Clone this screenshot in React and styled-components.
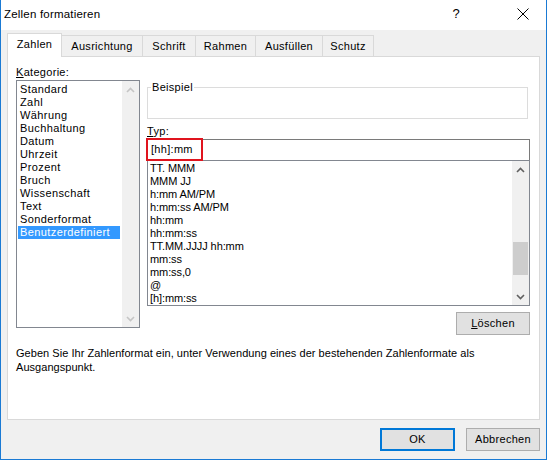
import React from "react";
import styled, { createGlobalStyle } from "styled-components";

const GlobalStyle = createGlobalStyle`
  html, body { margin: 0; padding: 0; background: #ffffff; }
  * { box-sizing: border-box; }
`;

const UI = `"Liberation Sans", Arial, sans-serif`;
const LISTFONT = `"Liberation Sans", Arial, sans-serif`;

const Window = styled.div`
  width: 547px;
  height: 460px;
  border: 1px solid #1a7ad4;
  border-top: none;
  display: flex;
  flex-direction: column;
  font-family: ${UI};
  font-size: 11px;
  color: #000;
  background: #f0f0f0;
`;

const TitleBar = styled.div`
  height: 30px;
  flex: none;
  background: #ffffff;
  display: flex;
  align-items: center;
`;

const Title = styled.div`
  flex: 1;
  padding-left: 3px;
  padding-bottom: 3px;
  font-size: 11.5px;
  letter-spacing: 0.2px;
`;

const TitleButton = styled.div`
  width: ${(p) => p.$w}px;
  height: 30px;
  display: flex;
  align-items: center;
  justify-content: center;
  font-size: 13px;
  padding-bottom: 3px;
  padding-right: ${(p) => p.$pr || 0}px;
`;

const Body = styled.div`
  flex: 1;
  display: flex;
  flex-direction: column;
  padding: 3px 6px 0 6px;
`;

const TabRow = styled.div`
  display: flex;
  align-items: flex-end;
  height: 24px;
  margin-bottom: -1px;
  position: relative;
  z-index: 1;
`;

const Tab = styled.div`
  width: ${(p) => p.$w}px;
  height: ${(p) => (p.$active ? 24 : 22)}px;
  margin-left: ${(p) => (p.$first ? 0 : -1)}px;
  border: 1px solid #d9d9d9;
  border-bottom: ${(p) => (p.$active ? "none" : "1px solid #d9d9d9")};
  background: ${(p) => (p.$active ? "#ffffff" : "#f0f0f0")};
  display: flex;
  align-items: center;
  justify-content: center;
  padding-bottom: ${(p) => (p.$active ? 3 : 1)}px;
  letter-spacing: 0.3px;
  position: relative;
  z-index: ${(p) => (p.$active ? 2 : 1)};
`;

const Panel = styled.div`
  width: 533px;
  height: 364px;
  background: #ffffff;
  border: 1px solid #d9d9d9;
  padding: 7px 8px 0 8px;
  display: flex;
  flex-direction: column;
`;

const Columns = styled.div`
  display: grid;
  grid-template-columns: 124px 383px;
  column-gap: 7px;
  align-items: start;
`;

const Column = styled.div`
  display: flex;
  flex-direction: column;
  padding-top: ${(p) => p.$pt || 0}px;
`;

const Label = styled.div`
  height: 16px;
  line-height: 16px;
  letter-spacing: 0.3px;
`;

const ListBox = styled.div`
  height: ${(p) => p.$h}px;
  border: 1px solid #828790;
  background: #fff;
  display: flex;
`;

const Items = styled.div`
  flex: 1;
  padding-top: ${(p) => p.$pt}px;
  overflow: hidden;
`;

const CatItem = styled.div`
  height: 13px;
  line-height: 13px;
  margin: 0 2px 0 1px;
  padding-left: 2px;
  white-space: nowrap;
  letter-spacing: 0.4px;
  background: ${(p) => (p.$selected ? "#3399ff" : "transparent")};
  color: ${(p) => (p.$selected ? "#ffffff" : "#000000")};
`;

const FmtItem = styled.div`
  height: 13px;
  line-height: 13px;
  padding-left: 2px;
  font-family: ${LISTFONT};
  font-size: 11px;
  letter-spacing: -0.1px;
  white-space: nowrap;
  color: #000;
`;

const ScrollBar = styled.div`
  width: 17px;
  background: #f0f0f0;
  display: flex;
  flex-direction: column;
`;

const Arrow = styled.div`
  height: 17px;
  display: flex;
  align-items: center;
  justify-content: center;
  flex: none;
`;

const Track = styled.div`
  flex: 1;
  display: flex;
  flex-direction: column;
  padding-top: ${(p) => p.$top}px;
`;

const Thumb = styled.div`
  height: ${(p) => p.$h}px;
  margin: 0 1px;
  background: #cdcdcd;
`;

const Group = styled.fieldset`
  margin: 0 0 4px 0;
  height: 39px;
  width: 381px;
  border: 1px solid #dcdcdc;
  padding: 0;
`;

const Legend = styled.legend`
  padding: 0 1px;
  margin-left: 3px;
  font-size: 11px;
  line-height: 14px;
  letter-spacing: 0.3px;
`;

const InputWrap = styled.div`
  position: relative;
  height: 21px;
`;

const Input = styled.div`
  height: 21px;
  border: 1px solid #7a7a7a;
  border-bottom: none;
  background: #fff;
  padding-left: 3px;
  line-height: 19px;
  font-family: ${UI};
  font-size: 11px;
  letter-spacing: 0.3px;
`;

const Highlight = styled.div`
  position: absolute;
  left: -1px;
  top: -1px;
  width: 57px;
  height: 23px;
  border: 2px solid #e0141e;
  pointer-events: none;
`;

const ButtonRow = styled.div`
  display: flex;
  justify-content: flex-end;
  gap: 11px;
  margin-top: ${(p) => p.$mt || 0}px;
`;

const Button = styled.div`
  width: ${(p) => p.$w}px;
  height: 23px;
  background: #e1e1e1;
  border: ${(p) => (p.$default ? "2px solid #0078d7" : "1px solid #adadad")};
  display: flex;
  align-items: center;
  justify-content: center;
  padding-bottom: 2px;
  letter-spacing: 0.3px;
`;

const Description = styled.div`
  margin-top: 11px;
  line-height: 14px;
  letter-spacing: 0.04px;
`;

const Footer = styled.div`
  padding-top: 8px;
`;

const Chevron = ({ up, color }) => (
  <svg width="9" height="6" viewBox="0 0 9 6">
    <path
      d={up ? "M1 5 L4.5 1.5 L8 5" : "M1 1 L4.5 4.5 L8 1"}
      fill="none"
      stroke={color}
      strokeWidth="1.6"
    />
  </svg>
);

const categories = [
  "Standard",
  "Zahl",
  "Währung",
  "Buchhaltung",
  "Datum",
  "Uhrzeit",
  "Prozent",
  "Bruch",
  "Wissenschaft",
  "Text",
  "Sonderformat",
  "Benutzerdefiniert",
];

const formats = [
  "TT. MMM",
  "MMM JJ",
  "h:mm AM/PM",
  "h:mm:ss AM/PM",
  "hh:mm",
  "hh:mm:ss",
  "TT.MM.JJJJ hh:mm",
  "mm:ss",
  "mm:ss,0",
  "@",
  "[h]:mm:ss",
];

const tabs = [
  { label: "Zahlen", w: 55 },
  { label: "Ausrichtung", w: 82 },
  { label: "Schrift", w: 54 },
  { label: "Rahmen", w: 61 },
  { label: "Ausfüllen", w: 68 },
  { label: "Schutz", w: 52 },
];

export default function App() {
  return (
    <>
      <GlobalStyle />
      <Window>
        <TitleBar>
          <Title>Zellen formatieren</Title>
          <TitleButton $w={67} $pr={21}>?</TitleButton>
          <TitleButton $w={46}>
            <svg width="12" height="12" viewBox="0 0 12 12">
              <path d="M0.5 0.5 L11.5 11.5 M11.5 0.5 L0.5 11.5" stroke="#000" strokeWidth="1" />
            </svg>
          </TitleButton>
        </TitleBar>
        <Body>
          <TabRow>
            {tabs.map((t, i) => (
              <Tab key={t.label} $w={t.w} $active={i === 0} $first={i === 0}>
                {t.label}
              </Tab>
            ))}
          </TabRow>
          <Panel>
            <Columns>
              <Column>
                <Label>
                  <u>K</u>ategorie:
                </Label>
                <ListBox $h={248}>
                  <Items $pt={2}>
                    {categories.map((c) => (
                      <CatItem key={c} $selected={c === "Benutzerdefiniert"}>
                        {c}
                      </CatItem>
                    ))}
                  </Items>
                  <ScrollBar>
                    <Arrow>
                      <Chevron up color="#c5c5c5" />
                    </Arrow>
                    <Track $top={0} />
                    <Arrow>
                      <Chevron color="#c5c5c5" />
                    </Arrow>
                  </ScrollBar>
                </ListBox>
              </Column>
              <Column $pt={16}>
                <Group>
                  <Legend>Beispiel</Legend>
                </Group>
                <Label>
                  <u>T</u>yp:
                </Label>
                <InputWrap>
                  <Input>[hh]:mm</Input>
                  <Highlight />
                </InputWrap>
                <ListBox $h={146}>
                  <Items $pt={1}>
                    {formats.map((f) => (
                      <FmtItem key={f}>{f}</FmtItem>
                    ))}
                  </Items>
                  <ScrollBar>
                    <Arrow>
                      <Chevron up color="#606060" />
                    </Arrow>
                    <Track $top={64}>
                      <Thumb $h={33} />
                    </Track>
                    <Arrow>
                      <Chevron color="#606060" />
                    </Arrow>
                  </ScrollBar>
                </ListBox>
                <ButtonRow $mt={6}>
                  <Button $w={74}>
                    <span>
                      <u>L</u>öschen
                    </span>
                  </Button>
                </ButtonRow>
              </Column>
            </Columns>
            <Description>
              Geben Sie Ihr Zahlenformat ein, unter Verwendung eines der bestehenden Zahlenformate als
              <br />
              Ausgangspunkt.
            </Description>
          </Panel>
          <Footer>
            <ButtonRow>
              <Button $w={75} $default>
                OK
              </Button>
              <Button $w={74}>Abbrechen</Button>
            </ButtonRow>
          </Footer>
        </Body>
      </Window>
    </>
  );
}
